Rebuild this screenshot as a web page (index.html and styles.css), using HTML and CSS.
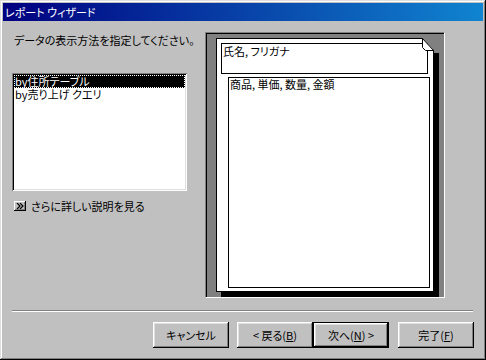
FILE: index.html
```html
<!DOCTYPE html>
<html lang="ja">
<head>
<meta charset="utf-8">
<title>レポート ウィザード</title>
<link rel="stylesheet" href="styles.css">
</head>
<body>
<div class="window">
  <div class="titlebar">レポート ウィザード</div>
  <div class="body">
    <div class="main">
      <div class="left">
        <p class="prompt">データの表示方法を指定してください。</p>
        <div class="listbox">
          <div class="item selected">by住所テーブル</div>
          <div class="item">by売り上げ クエリ</div>
        </div>
        <div class="help">
          <span class="helpbtn"><svg width="8" height="6" viewBox="0 0 8 6"><path d="M1 0l3 3l-3 3M4 0l3 3l-3 3" fill="none" stroke="#000" stroke-width="1.2"/></svg></span>
          <span class="helptext">さらに詳しい説明を見る</span>
        </div>
      </div>
      <div class="preview">
        <div class="page">
          <div class="hdr">氏名, フリガナ</div>
          <div class="detail">商品, 単価, 数量, 金額</div>
          <svg class="fold" width="18" height="15" viewBox="0 0 18 15">
            <polygon points="1,0 18,0 18,15 13,15 13,12.5" fill="#808080"/>
            <polygon points="1.5,0.5 1.5,9.5 4.5,12.5 12.5,12.5" fill="#fff" stroke="#000" stroke-width="1"/>
          </svg>
        </div>
      </div>
    </div>
    <div class="sep"></div>
    <div class="buttons">
      <button class="btn">キャンセル</button>
      <button class="btn gap">&lt; 戻る(<u>B</u>)</button>
      <button class="btn default">次へ(<u>N</u>) &gt;</button>
      <button class="btn gap2">完了(<u>F</u>)</button>
    </div>
  </div>
</div>
</body>
</html>
```
FILE: styles.css
```css
* { box-sizing: border-box; }
html, body { margin: 0; padding: 0; }
body {
  font-family: "Noto Sans CJK JP", "Noto Sans", sans-serif;
  font-size: 11px;
  font-feature-settings: "palt";
  color: #000;
}
.window {
  width: 486px;
  height: 360px;
  background: #c0c0c0;
  padding: 3px;
  box-shadow: inset -1px -1px #000, inset 1px 1px #dfdfdf, inset -2px -2px #808080, inset 2px 2px #fff;
}
.titlebar {
  height: 18px;
  line-height: 18px;
  padding-left: 2px;
  color: #fff;
  background: linear-gradient(to right, #000080, #1084d0);
}
.body {
  padding-left: 9px;
}
.main {
  display: flex;
  align-items: flex-start;
}
.left {
  width: 175px;
  margin-top: 13px;
}
.prompt {
  margin: 0;
  padding-left: 2px;
  line-height: 12px;
  height: 12px;
  white-space: nowrap;
}
.listbox {
  margin-top: 27px;
  height: 118px;
  background: #fff;
  padding: 2px;
  box-shadow: inset 1px 1px #808080, inset -1px -1px #fff, inset 2px 2px #000, inset -2px -2px #dfdfdf;
}
.item {
  height: 13px;
  line-height: 13px;
  padding-left: 1px;
  white-space: nowrap;
}
.item.selected {
  background: #000;
  color: #fff;
  outline: 1px dotted #fff;
  outline-offset: -1px;
}
.help {
  margin-top: 9px;
  display: flex;
  align-items: center;
  height: 12px;
}
.helpbtn {
  width: 12px;
  height: 10px;
  margin-left: 2px;
  display: flex;
  align-items: center;
  justify-content: center;
  background: #c0c0c0;
  box-shadow: inset -1px -1px #000, inset 1px 1px #fff, inset -2px -2px #808080;
}
.helptext {
  margin-left: 5px;
  line-height: 12px;
  white-space: nowrap;
}
.preview {
  margin-left: 18px;
  margin-top: 11px;
  width: 240px;
  height: 266px;
  background: #808080;
  border-top: 1px solid #808080;
  border-left: 1px solid #808080;
  border-right: 1px solid #fff;
  border-bottom: 1px solid #fff;
  box-shadow: inset 1px 1px #000;
  padding: 5px 0 0 10px;
}
.page {
  position: relative;
  width: 218px;
  height: 254px;
  background: #fff;
  border: 1px solid #000;
  box-shadow: 5px 5px 0 #000;
  padding: 4px 0 0 4px;
}
.hdr {
  width: 207px;
  height: 31px;
  border: 1px solid #000;
  padding: 1px 0 0 1px;
  line-height: 13px;
}
.detail {
  margin-top: 3px;
  margin-left: 7px;
  width: 202px;
  height: 211px;
  border: 1px solid #000;
  padding: 0 0 0 1px;
  line-height: 13px;
}
.fold {
  position: absolute;
  left: 204px;
  top: -1px;
  display: block;
}
.sep {
  margin-top: 12px;
  width: 461px;
  height: 2px;
  border-top: 1px solid #808080;
  border-bottom: 1px solid #fff;
}
.buttons {
  display: flex;
  justify-content: flex-end;
  padding-right: 9px;
  margin-top: 10px;
}
.btn {
  width: 76px;
  height: 26px;
  margin: 0;
  padding: 0;
  border: none;
  background: #c0c0c0;
  font: inherit;
  font-feature-settings: "palt";
  color: #000;
  box-shadow: inset -1px -1px #000, inset 1px 1px #fff, inset -2px -2px #808080, inset 2px 2px #dfdfdf;
}
.btn.gap { margin-left: 8px; }
.btn.gap2 { margin-left: 9px; }
.btn.default {
  box-shadow: inset 0 0 0 1px #000, inset -2px -2px #000, inset 2px 2px #fff, inset -3px -3px #808080, inset 3px 3px #dfdfdf;
}
.btn u { text-decoration: underline; text-underline-offset: 1px; }
```
